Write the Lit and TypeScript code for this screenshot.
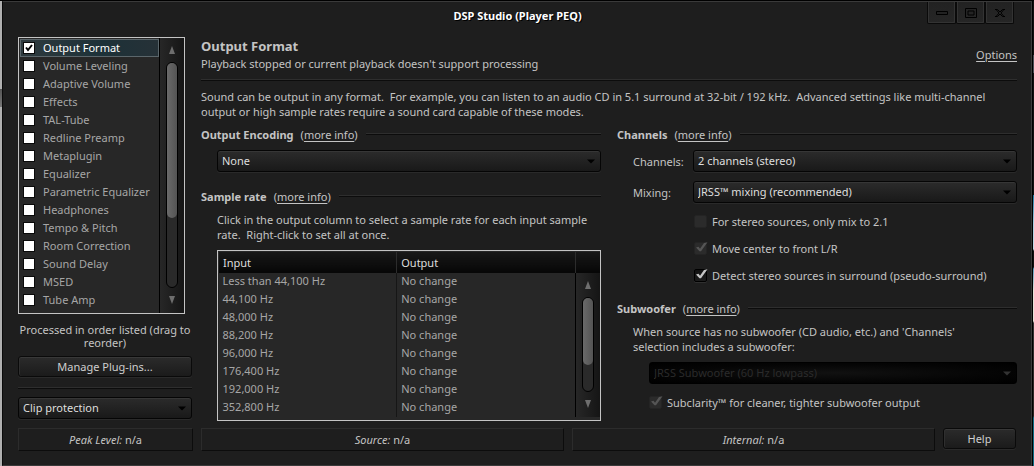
import { LitElement, html, css } from "lit";
import { customElement, property } from "lit/decorators.js";

const controls = css`
  *, *::before, *::after { box-sizing: border-box; }
  button, select, input { font: inherit; color: inherit; margin: 0; }
  a { color: inherit; text-decoration: underline; text-underline-offset: 2px; }
`;

@customElement("dsp-select")
class DspSelect extends LitElement {
  @property() label = "";
  @property() value = "";
  @property({ type: Boolean }) off = false;
  static styles = [controls, css`
    :host { display: grid; min-width: 0; }
    .box, .arrow { grid-area: 1 / 1; }
    .box {
      appearance: none; width: 100%; height: 22px; padding: 0 20px 0 4px;
      border: 1px solid #050505; border-radius: 3px; outline: none;
      background: linear-gradient(#2b2b2b, #191919);
      box-shadow: inset 0 1px #363636, 0 1px #2a2a2a;
      color: #dedede; line-height: 20px;
    }
    .box:disabled {
      background: radial-gradient(ellipse at 50% 50%, #111 0, #050505 60%, #000 100%);
      border-color: #000; box-shadow: none; color: #2b2b2b; opacity: 1;
    }
    .arrow { align-self: center; justify-self: end; margin-right: 6px; pointer-events: none; fill: #000; }
    .dim { fill: #333; }
  `];
  render() {
    return html`
      <select class="box" aria-label=${this.label} ?disabled=${this.off}><option>${this.value}</option></select>
      <svg class="arrow ${this.off ? "dim" : ""}" width="8" height="5" viewBox="0 0 8 5"><path d="M0 .5h8L4 4.500z"/></svg>`;
  }
}

@customElement("dsp-check")
class DspCheck extends LitElement {
  @property() text = "";
  @property({ type: Boolean }) on = false;
  @property({ type: Boolean }) off = false;
  static styles = [controls, css`
    :host { display: block; }
    .row { display: flex; align-items: center; gap: 5px; height: 18px; }
    .cell { display: grid; width: 13px; height: 13px; }
    .tick, .mark { grid-area: 1 / 1; }
    .tick {
      appearance: none; width: 13px; height: 13px; border: 1px solid #000; border-radius: 2px;
      background: linear-gradient(#111, #1c1c1c); box-shadow: 0 1px #303030;
    }
    .tick:disabled { border-color: #242424; background: #2b2b2b; box-shadow: none; }
    .mark { pointer-events: none; fill: #c4c4c4; overflow: visible; }
    .dim { fill: #555; }
  `];
  render() {
    return html`<label class="row"><span class="cell">
      <input class="tick" type="checkbox" .checked=${this.on} ?disabled=${this.off}>
      ${this.on ? html`<svg class="mark ${this.off ? "dim" : ""}" width="13" height="13" viewBox="0 0 13 13"><path d="M2 5.500 4.500 4.800 6 6.800 10 1 13.500 .2 7 9.200H5.500z"/></svg>` : ""}
      </span>${this.text}</label>`;
  }
}

@customElement("dsp-heading")
class DspHeading extends LitElement {
  @property() text = "";
  static styles = [controls, css`
    :host { display: flex; align-items: center; height: 18px; }
    .title { font-size: inherit; font-weight: 700; margin: 0 7px 0 0; }
    .rule { flex: 1; height: 2px; margin-left: 8px; background: linear-gradient(#2e2e2e 50%, #0c0c0c 50%); }
  `];
  render() {
    return html`<h2 class="title">${this.text}</h2><span>(<a href="#">more info</a>)</span><span class="rule"></span>`;
  }
}

@customElement("dsp-scrollbar")
class DspScrollbar extends LitElement {
  @property({ type: Number }) share = 50;
  static styles = css`
    :host {
      box-sizing: border-box; display: flex; flex-direction: column; align-items: center;
      gap: 8px; height: 100%; width: 100%; padding: 8px 0 9px; border-left: 1px solid #000;
      background: linear-gradient(90deg, #272727, #151515);
    }
    .arrow { flex: none; fill: #6e6e6e; }
    .track { box-sizing: border-box; flex: 1; width: 12px; border: 1px solid #000; border-radius: 6px; background: #2a2a2a; }
    .thumb { border-radius: 5px; background: linear-gradient(90deg, #6a6a6a, #545454); }
  `;
  render() {
    return html`
      <svg class="arrow" width="8" height="8" viewBox="0 0 8 8"><path d="M4 0 7 8H1z"/></svg>
      <div class="track"><div class="thumb" style="height:${this.share}%"></div></div>
      <svg class="arrow" width="8" height="8" viewBox="0 0 8 8"><path d="M1 0h6L4 8z"/></svg>`;
  }
}

const plugins = ["Output Format", "Volume Leveling", "Adaptive Volume", "Effects", "TAL-Tube", "Redline Preamp",
  "Metaplugin", "Equalizer", "Parametric Equalizer", "Headphones", "Tempo & Pitch", "Room Correction",
  "Sound Delay", "MSED", "Tube Amp"];
const rates = ["Less than 44,100 Hz", "44,100 Hz", "48,000 Hz", "88,200 Hz", "96,000 Hz", "176,400 Hz", "192,000 Hz", "352,800 Hz"];

@customElement("app-root")
class AppRoot extends LitElement {
  static styles = [controls, css`
    :host {
      box-sizing: border-box; display: flex; min-height: 100vh; padding-top: 1px; background: #000;
      font: 11px/15px "Noto Sans", "Open Sans", sans-serif; color: #c4c4c4;
    }
    .edge { width: 2px; background: linear-gradient(#b0b0b0 88px, #555 88px, #777 106px, #b0b0b0 106px); }
    .desk {
      width: 1px; margin-left: 1px;
      background: linear-gradient(#111 54px, #4a4d55 54px, #4a4d55 72px, #111 72px, #111 194px, #1f7da5 194px, #a9cfe2 222px,
        #c4dbe8 248px, #111 250px, #111 266px, #5d9fc0 268px, #e6e2d8 290px, #e6e2d8 320px, #333 322px, #2b2422 415px, #0e6c84 417px);
    }
    .window {
      flex: 1; min-width: 0; display: flex; flex-direction: column;
      border: 1px solid #3a3a3a; border-left-color: #0a0a0a; background: #1e1e1e; padding: 0 14px 0 15px;
    }
    .bar { display: grid; grid-template-columns: 1fr auto 1fr; align-items: start; height: 35px; }
    .name { grid-column: 2; margin: 0; padding-top: 6px; font-size: 11px; line-height: 15px; font-weight: 700; color: #fff; text-shadow: 1px 1px #000; }
    .caps { justify-self: end; display: flex; margin-right: 3px; }
    .cap {
      display: grid; place-items: center; width: 29px; height: 22px; padding: 0; border: 1px solid #0a0a0a; border-top: 0;
      border-radius: 0 0 2px 2px; background: linear-gradient(#222, #262626); box-shadow: inset 1px 0 #333, inset -1px -1px #333;
    }
    .glyph { stroke: #000; fill: none; }
    .body { display: grid; grid-template-columns: 174px minmax(0, 1fr); column-gap: 9px; }
    .side { display: flex; flex-direction: column; }
    .list { display: flex; width: 167px; border: 1px solid #c4c4c4; background: #272727; }
    .items { flex: 1; list-style: none; margin: 0; padding: 1px 0 4px 1px; color: #a6a6a6; }
    .item { display: flex; align-items: center; height: 18px; padding-left: 2px; line-height: 14px; border: 1px solid transparent; white-space: nowrap; }
    .picked { color: #fff; border-color: #5b666b; background: linear-gradient(90deg, #2e3a3e, #1d3138 60%, #263137); }
    .scroll { width: 25px; }
    .cell { display: grid; width: 12px; height: 12px; }
    .tick, .mark { grid-area: 1 / 1; }
    .tick { appearance: none; width: 12px; height: 12px; border: 1px solid #0a0a0a; background: #fff; }
    .mark { fill: none; stroke: #000; stroke-width: 2; pointer-events: none; }
    .entry { display: flex; align-items: center; gap: 8px; }
    .hint { margin: 9px 0 7px; text-align: center; line-height: 13px; white-space: nowrap; }
    .push {
      height: 21px; padding: 0; border: 1px solid #0a0a0a; border-radius: 3px; color: #cfcfcf; line-height: 19px;
      background: linear-gradient(#2b2b2b, #1b1b1b); box-shadow: inset 0 1px #383838, inset 1px 0 #2f2f2f, 0 1px #2a2a2a;
    }
    .rule { height: 2px; background: linear-gradient(#2e2e2e 50%, #0c0c0c 50%); }
    .side .rule { margin: 10px 0 8px; }
    .top { display: flex; justify-content: space-between; align-items: center; height: 42px; padding-bottom: 8px; }
    .page { margin: 0; font-size: 13px; line-height: 19px; font-weight: 700; }
    .note { margin: 0; }
    .intro { margin: 8px 0 6px; }
    .cols { display: grid; grid-template-columns: 1fr 1fr; column-gap: 16px; }
    .inset { padding-left: 16px; }
    .block { margin: 7px 0 15px; }
    .note.rate { margin: 7px 0 8px; }
    .frame { border: 1px solid #c4c4c4; background: #272727; padding: 1px 0 3px; }
    .grid { width: 100%; border-collapse: collapse; table-layout: fixed; }
    .grid th, .grid td { padding: 0 0 0 4px; text-align: left; font-weight: 400; height: 18px; line-height: 14px; white-space: nowrap; }
    .grid th { height: 21px; color: #dedede; background: linear-gradient(#181818, #060606); border-left: 1px solid #2c2c2c; }
    .grid td { color: #a6a6a6; padding-bottom: 2px; }
    .grid td + td { border-left: 1px solid #161616; }
    .grid .scrollcell { padding: 0; border: 0; height: 144px; }
    .track { height: 144px; }
    .fields { display: grid; grid-template-columns: 76px minmax(0, 1fr); align-items: center; row-gap: 9px; margin: 7px 0 9px; }
    .caption { padding-left: 16px; }
    .checks { display: grid; gap: 9px; padding-left: 77px; margin-bottom: 15px; }
    .sub { display: grid; gap: 9px; padding-left: 32px; }
    .status { display: grid; grid-template-columns: 175px 1fr 1fr 73px; gap: 8px; margin: 7px 0 0; padding-right: 1px; }
    .panel { height: 23px; line-height: 21px; text-align: center; border: 1px solid; border-color: #2c2c2c #0c0c0c #0c0c0c #2c2c2c; }
  `];

  render() {
    return html`<div class="edge"></div><div class="window">
      <header class="bar">
        <h1 class="name">DSP Studio (Player PEQ)</h1>
        <div class="caps">
          <button class="cap" aria-label="Minimize"><svg class="glyph" width="12" height="10" viewBox="0 0 12 10"><path d="M.5 3.500h11v3H.5z" fill="#222"/></svg></button>
          <button class="cap" aria-label="Maximize"><svg class="glyph" width="12" height="10" viewBox="0 0 12 10"><path d="M.5.5h11v9H.5zM3 3h6v4H3z"/></svg></button>
          <button class="cap" aria-label="Close"><svg class="glyph" width="12" height="10" viewBox="0 0 12 10"><path d="M1 1.500h2.500L6 4l2.500-2.500H11M1 8.500h2.500L6 6l2.500 2.500H11M2.500 2 5 5 2.500 8M9.500 2 7 5l2.500 3"/></svg></button>
        </div>
      </header>
      <div class="body">
        <aside class="side">
          <div class="list">
            <ul class="items">${plugins.map((p, i) => html`<li class="item ${i === 0 ? "picked" : ""}"><label class="entry">
              <span class="cell"><input class="tick" type="checkbox" .checked=${i === 0}>
              ${i === 0 ? html`<svg class="mark" width="12" height="12" viewBox="0 0 12 12"><path d="M3 5.500 5 8l4-5"/></svg>` : ""}</span>${p}</label></li>`)}</ul>
            <div class="scroll"><dsp-scrollbar share="69"></dsp-scrollbar></div>
          </div>
          <p class="hint">Processed in order listed (drag to<br>reorder)</p>
          <button class="push">Manage Plug-ins...</button>
          <div class="rule"></div>
          <dsp-select label="Clip handling" value="Clip protection"></dsp-select>
        </aside>
        <main>
          <div class="top">
            <div><h2 class="page">Output Format</h2><p class="note">Playback stopped or current playback doesn't support processing</p></div>
            <a href="#">Options</a>
          </div>
          <div class="rule"></div>
          <p class="intro">Sound can be output in any format.&nbsp; For example, you can listen to an audio CD in 5.1 surround at 32-bit / 192 kHz.&nbsp; Advanced settings like multi-channel<br>output or high sample rates require a sound card capable of these modes.</p>
          <div class="cols">
            <section>
              <dsp-heading text="Output Encoding"></dsp-heading>
              <div class="inset block"><dsp-select label="Output encoding" value="None"></dsp-select></div>
              <dsp-heading text="Sample rate"></dsp-heading>
              <div class="inset">
                <p class="note rate">Click in the output column to select a sample rate for each input sample<br>rate.&nbsp; Right-click to set all at once.</p>
                <div class="frame"><table class="grid">
                  <colgroup><col><col><col style="width:25px"></colgroup>
                  <thead><tr><th>Input</th><th>Output</th><th></th></tr></thead>
                  <tbody>${rates.map((r, i) => html`<tr><td>${r}</td><td>No change</td>${i === 0
                    ? html`<td class="scrollcell" rowspan="8"><div class="track"><dsp-scrollbar share="72"></dsp-scrollbar></div></td>` : ""}</tr>`)}</tbody>
                </table></div>
              </div>
            </section>
            <section>
              <dsp-heading text="Channels"></dsp-heading>
              <div class="fields">
                <span class="caption">Channels:</span><dsp-select label="Channels" value="2 channels (stereo)"></dsp-select>
                <span class="caption">Mixing:</span><dsp-select label="Mixing" value="JRSS™ mixing (recommended)"></dsp-select>
              </div>
              <div class="checks">
                <dsp-check text="For stereo sources, only mix to 2.1" off></dsp-check>
                <dsp-check text="Move center to front L/R" on off></dsp-check>
                <dsp-check text="Detect stereo sources in surround (pseudo-surround)" on></dsp-check>
              </div>
              <dsp-heading text="Subwoofer"></dsp-heading>
              <div class="inset"><p class="note rate">When source has no subwoofer (CD audio, etc.) and 'Channels'<br>selection includes a subwoofer:</p></div>
              <div class="sub">
                <dsp-select label="Subwoofer" value="JRSS Subwoofer (60 Hz lowpass)" off></dsp-select>
                <dsp-check text="Subclarity™ for cleaner, tighter subwoofer output" on off></dsp-check>
              </div>
            </section>
          </div>
        </main>
      </div>
      <footer class="status">
        <div class="panel"><i>Peak Level:</i> n/a</div>
        <div class="panel"><i>Source:</i> n/a</div>
        <div class="panel"><i>Internal:</i> n/a</div>
        <button class="push">Help</button>
      </footer>
    </div><div class="desk"></div>`;
  }
}
